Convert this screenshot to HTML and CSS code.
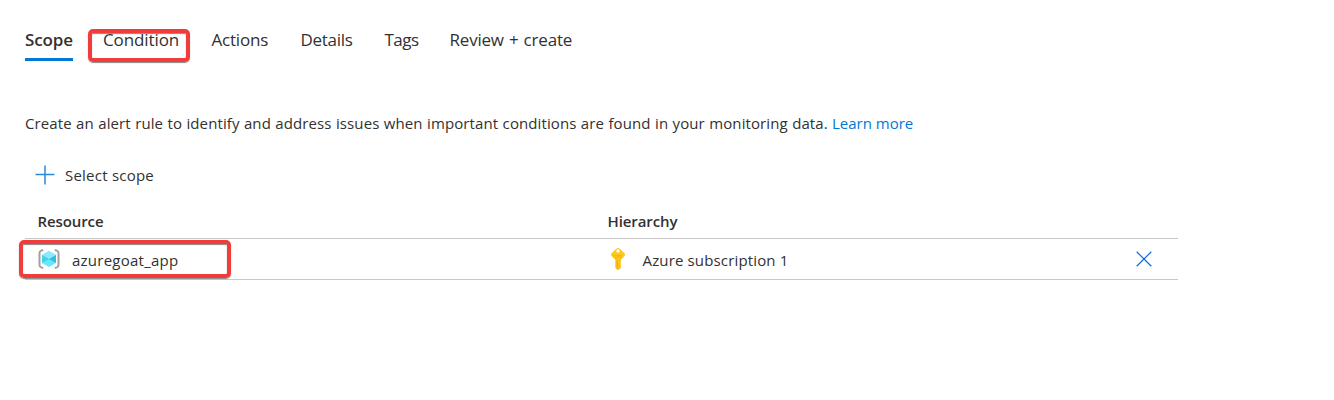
FILE: index.html
```html
<!DOCTYPE html>
<html lang="en">
<head>
<meta charset="utf-8">
<title>Create an alert rule</title>
<link rel="stylesheet" href="styles.css">
</head>
<body>
<main class="page">
  <nav class="tabs">
    <a class="tab tab-active">Scope</a>
    <a class="tab tab-condition">Condition<span class="mark mark-tab"></span></a>
    <a class="tab tab-actions">Actions</a>
    <a class="tab tab-details">Details</a>
    <a class="tab tab-tags">Tags</a>
    <a class="tab tab-review">Review + create</a>
  </nav>
  <p class="intro"><span class="intro-text">Create an alert rule to identify and address issues when important conditions are found in your monitoring data.</span><a class="link">Learn more</a></p>
  <div class="command">
    <svg class="plus" width="20" height="20" viewBox="0 0 20 20"><path d="M10 .5v19M.5 9.500h19" stroke="#2b88d8" stroke-width="1.5" fill="none"/></svg>
    <span class="command-label">Select scope</span>
  </div>
  <section class="table">
    <div class="row head">
      <span class="col-resource">Resource</span>
      <span>Hierarchy</span>
    </div>
    <div class="row item">
      <div class="col-resource">
        <svg class="group-icon" width="22" height="20" viewBox="0 0 22 20">
          <path d="M5.200 1L3.200 1.600Q1.500 2.300 1.500 4v12q0 1.700 1.700 2.400l2 .6M16.800 1l2 .6q1.700.7 1.700 2.400v12q0 1.700-1.700 2.400l-2 .6" fill="none" stroke="#a0a0a0" stroke-width="2"/>
          <path d="M11 2l7 4v8l-7 4-7-4V6z" fill="#66e6ff"/>
          <path d="M11 2l7 4-7 4-7-4z" fill="#8ceaff"/>
          <path d="M18 6l-7 4 7 4z" fill="#32bedd"/>
          <path d="M4 6l7 4-7 4z" fill="#48cfea"/>
        </svg>
        <span class="name">azuregoat_app</span>
      </div>
      <div class="col-hierarchy">
        <svg class="key-icon" width="16" height="22" viewBox="0 0 16 22">
          <defs><linearGradient id="gold" x2="0" y2="1"><stop offset="0" stop-color="#ffc91c"/><stop offset="1" stop-color="#fdc01a"/></linearGradient></defs>
          <path fill="url(#gold)" fill-rule="evenodd" d="M8 0Q9 0 10 1l4.500 4.200q1 1.400 0 2.800L11 11.800V14l-.6 1 .6 1-.6 1 .6 1v1.700L8.500 22h-1L5.300 19.700v-7.900L1.500 8q-1-1.400 0-2.800L6 1Q7 0 8 0zm0 1.300a1.700 1.700 0 1 0 0 3.400 1.700 1.700 0 0 0 0-3.400z"/>
          <path d="M4.200 7.500h7.600M4.700 9h6.600" stroke="#f9ae0c" stroke-width=".8"/>
          <path d="M7.200 12v7.500" stroke="#f6a500" stroke-width=".9"/>
        </svg>
        <span class="subscription">Azure subscription 1</span>
      </div>
      <svg class="remove" width="16" height="16" viewBox="0 0 16 16"><path d="M.7.7l14.600 14.600M15.300.7L.7 15.300" stroke="#1769e0" stroke-width="1.25" fill="none"/></svg>
      <span class="mark mark-row"></span>
    </div>
  </section>
</main>
</body>
</html>
```
FILE: styles.css
```css
body {
  margin: 0;
  background: #fff;
  color: #323130;
  font: 15px/20px "Open Sans", "Noto Sans", sans-serif;
}
.page { padding: 27px 156px 0 25px; }
.tabs { display: flex; height: 34px; font-size: 17px; line-height: 26px; letter-spacing: -0.2px; }
.tab { position: relative; box-sizing: border-box; white-space: nowrap; }
.tab-active { width: 48px; margin-right: 30px; font-weight: 600; letter-spacing: -0.1px; border-bottom: 3px solid #0078d4; }
.tab-condition { width: 108.500px; letter-spacing: -0.100px; }
.tab-actions { width: 89px; }
.tab-details { width: 84px; letter-spacing: -0.3px; }
.tab-tags { width: 65px; letter-spacing: -0.5px; }
.tab-review { word-spacing: 0.9px; }
.mark {
  position: absolute;
  box-sizing: border-box;
  border: 4px solid #f23c3c;
  border-radius: 5px;
  box-shadow: 0 1px 1px #888, inset 0 1px 1px #888;
}
.mark-tab { left: -15px; top: 2px; width: 102px; height: 33px; }
.intro { display: flex; margin: 52px 0 0; white-space: nowrap; }
.intro-text { width: 807px; letter-spacing: 0.1px; word-spacing: 0.4px; }
.link { color: #0078d4; }
.command { display: flex; align-items: center; height: 20px; margin-top: 32px; padding-left: 10px; }
.plus { margin-top: -1px; }
.command-label { margin-left: 10px; letter-spacing: 0.23px; }
.table { margin-top: 26px; }
.row { display: flex; box-sizing: border-box; border-bottom: 1px solid #c8c8c8; }
.head { height: 28px; font-weight: 600; letter-spacing: -0.1px; }
.col-resource { display: flex; width: 570px; padding-left: 12.500px; }
.item { position: relative; height: 41px; align-items: flex-start; }
.item .col-resource, .col-hierarchy { padding-top: 9px; }
.group-icon { flex: none; margin-top: 1px; }
.name { margin-left: 12.500px; letter-spacing: 0.25px; }
.col-hierarchy { display: flex; width: 527px; padding-left: 2.500px; }
.subscription { margin-left: 16.500px; letter-spacing: 0.15px; }
.item .name, .item .subscription { line-height: 25px; }
.remove { margin: 12px 0 0 -1.500px; }
.mark-row { left: -6px; top: 1px; width: 212px; height: 38px; }
```
